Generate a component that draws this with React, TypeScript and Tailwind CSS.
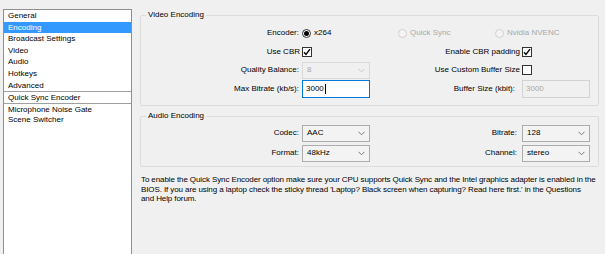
import type { ReactNode } from "react";

const menu = [
  { label: "General" },
  { label: "Encoding", selected: true },
  { label: "Broadcast Settings" },
  { label: "Video" },
  { label: "Audio" },
  { label: "Hotkeys" },
  { label: "Advanced" },
  { label: "Quick Sync Encoder", divider: true },
  { label: "Microphone Noise Gate", divider: true },
  { label: "Scene Switcher" },
];

const Chevron = ({ disabled }: { disabled?: boolean }) => (
  <svg width="7" height="5" viewBox="0 0 7 5" className="shrink-0">
    <polyline
      points="0.5,0.8 3.5,3.8 6.5,0.8"
      fill="none"
      stroke={disabled ? "#c8c8c8" : "#7a7a7a"}
      strokeWidth="1"
    />
  </svg>
);

function Combo({ value, disabled }: { value: string; disabled?: boolean }) {
  return (
    <div
      className={`flex h-[17px] w-full items-center justify-between border pl-[4px] pr-[4px] ${
        disabled
          ? "border-[#d9d9d9] bg-[#f0f0f0] text-[#a8a8a8]"
          : "border-[#acacac] bg-[#f3f3f3] text-black"
      }`}
    >
      <span>{value}</span>
      <Chevron disabled={disabled} />
    </div>
  );
}

function Check({ checked }: { checked?: boolean }) {
  return (
    <div className="flex h-[10px] w-[10px] items-center justify-center border border-[#333333] bg-white">
      {checked && (
        <svg width="8" height="8" viewBox="0 0 8 8">
          <polyline points="1,4.2 3,6.5 7,1.2" fill="none" stroke="#000" strokeWidth="1.4" />
        </svg>
      )}
    </div>
  );
}

function Radio({ label, checked, disabled }: { label: string; checked?: boolean; disabled?: boolean }) {
  return (
    <div className="flex items-center gap-[3px]">
      <div
        className={`flex h-[9px] w-[9px] items-center justify-center rounded-full border ${
          disabled ? "border-[#d0d0d0] bg-[#f4f4f4]" : "border-[#333333] bg-white"
        }`}
      >
        {checked && <div className="h-[5px] w-[5px] rounded-full bg-black" />}
      </div>
      <span className={disabled ? "text-[#a8a8a8]" : ""}>{label}</span>
    </div>
  );
}

const Group = ({ title, className, children }: { title: string; className: string; children: ReactNode }) => (
  <fieldset className={`rounded-[2px] border border-[#dcdcdc] ${className}`}>
    <legend className="ml-[5px] px-[2px]">{title}</legend>
    {children}
  </fieldset>
);

export default function App() {
  return (
    <div className="flex h-[254px] w-[605px] overflow-hidden bg-[#f0f0f0] font-['Liberation_Sans',Arial,sans-serif] text-[8px] leading-[10px] text-black">
      {/* Settings list */}
      <aside className="ml-[3px] mt-[9px] flex w-[129px] shrink-0 flex-col border border-b-0 border-[#8f8f8f] bg-white">
        {menu.map((item) => (
          <div
            key={item.label}
            className={`h-[11.6px] pl-[4px] leading-[11.6px] ${
              item.divider ? "border-t border-[#a0a0a0]" : ""
            } ${item.selected ? "bg-[#3399ff] text-white" : ""}`}
          >
            {item.label}
          </div>
        ))}
      </aside>

      <main className="ml-[8px] mt-[10px] w-[459px] shrink-0">
        <Group title="Video Encoding" className="pb-[7px] pt-[4px]">
          <div className="grid auto-rows-[18.5px] grid-cols-[161px_68px_152px_68px] items-center">
            <div className="pr-[3px] text-right">Encoder:</div>
            <div className="col-span-3 flex">
              <div className="w-[96px]">
                <Radio label="x264" checked />
              </div>
              <div className="w-[97px]">
                <Radio label="Quick Sync" disabled />
              </div>
              <Radio label="Nvidia NVENC" disabled />
            </div>

            <div className="pr-[2px] text-right">Use CBR</div>
            <Check checked />
            <div className="pr-[2px] text-right">Enable CBR padding</div>
            <Check checked />

            <div className="pr-[3px] text-right">Quality Balance:</div>
            <Combo value="8" disabled />
            <div className="pr-[2px] text-right">Use Custom Buffer Size</div>
            <Check />

            <div className="pr-[3px] text-right">Max Bitrate (kb/s):</div>
            <div className="flex h-[18px] items-center border border-[#0078d7] bg-white pl-[3px]">
              <span>3000</span>
              <span className="ml-px h-[10px] w-px bg-black" />
            </div>
            <div className="pr-[7px] text-right">Buffer Size (kbit):</div>
            <div className="flex h-[18px] items-center border border-[#d2d2d2] bg-[#f0f0f0] pl-[3px] text-[#a8a8a8]">
              3000
            </div>
          </div>
        </Group>

        <Group title="Audio Encoding" className="mt-[5px] pb-[3px] pt-[2px]">
          <div className="grid auto-rows-[20px] grid-cols-[161px_68px_152px_68px] items-center">
            <div className="pr-[3px] text-right">Codec:</div>
            <Combo value="AAC" />
            <div className="pr-[5px] text-right">Bitrate:</div>
            <Combo value="128" />

            <div className="pr-[3px] text-right">Format:</div>
            <Combo value="48kHz" />
            <div className="pr-[5px] text-right">Channel:</div>
            <Combo value="stereo" />
          </div>
        </Group>

        <p className="mt-[8px] whitespace-nowrap pl-px leading-[9.5px] tracking-[-0.1px]">
          To enable the Quick Sync Encoder option make sure your CPU supports Quick Sync and the Intel graphics adapter is enabled in the
          <br />
          BIOS. If you are using a laptop check the sticky thread 'Laptop? Black screen when capturing? Read here first.' in the Questions
          <br />
          and Help forum.
        </p>
      </main>
    </div>
  );
}
